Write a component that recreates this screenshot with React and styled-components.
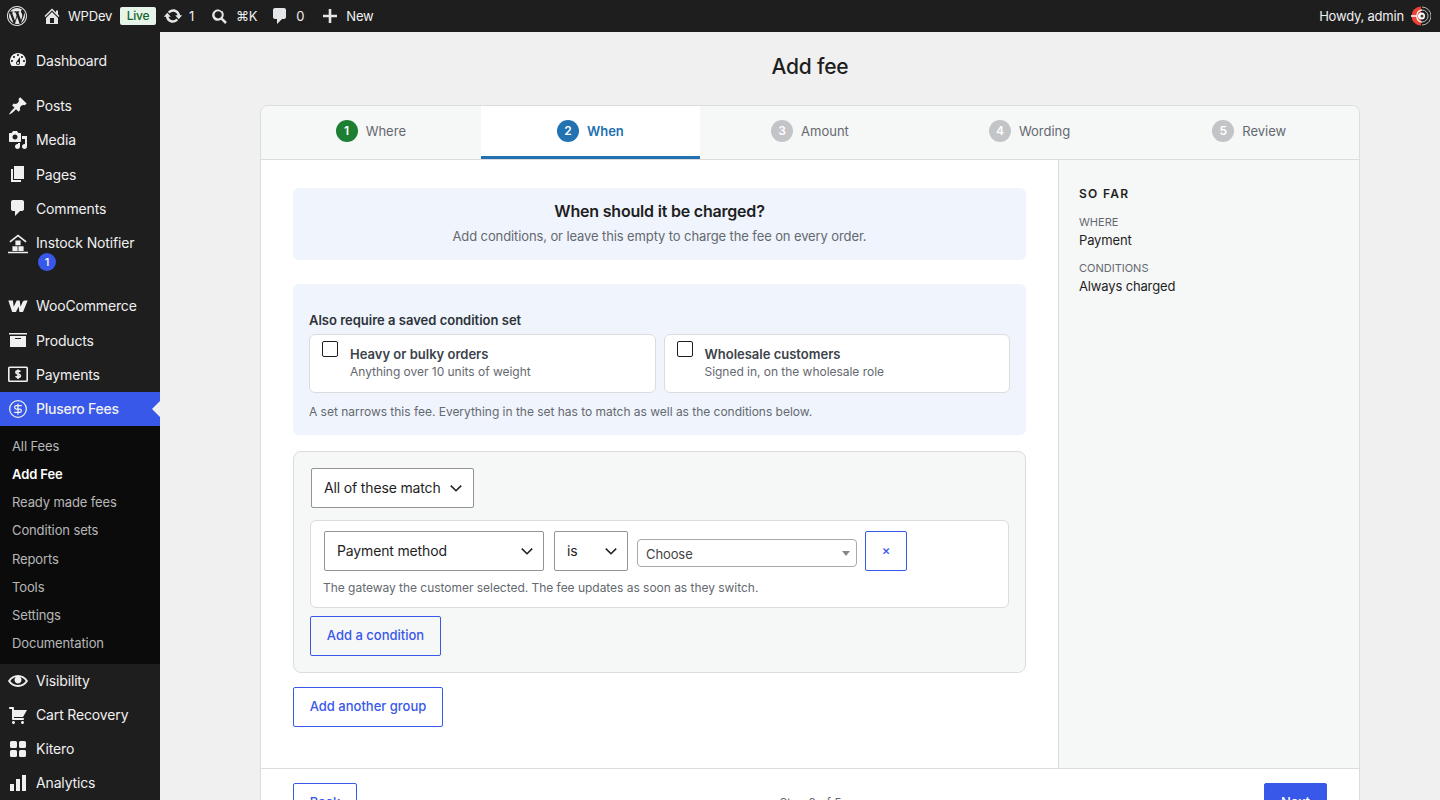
import React from "react";
import styled, { createGlobalStyle } from "styled-components";
import { CircleDollarSign } from "lucide-react";

const Dash = ({ d, size = 20 }) => (
  <svg width={size} height={size} viewBox="0 0 20 20" fill="currentColor">
    <path d={d} />
  </svg>
);

const icons = {
  wp: "M20 10c0-5.52-4.48-10-10-10S0 4.48 0 10s4.48 10 10 10 10-4.48 10-10zM10 1.01c4.96 0 8.99 4.03 8.99 8.99s-4.03 8.99-8.99 8.99S1.01 14.96 1.01 10 5.04 1.01 10 1.01zM8.01 14.82L4.96 6.61c.49-.03 1.05-.08 1.05-.08.43-.05.38-1.01-.06-.99 0 0-1.29.1-2.13.1-.15 0-.33 0-.52-.01 1.44-2.17 3.9-3.6 6.7-3.6 2.09 0 3.99.79 5.41 2.09-.6-.08-1.45.35-1.45 1.42 0 .66.38 1.22.79 1.88.31.54.5 1.22.5 2.21 0 1.34-1.27 4.48-1.27 4.48l-2.71-7.5c.48-.03.75-.16.75-.16.43-.05.38-1.1-.05-1.08 0 0-1.3.11-2.14.11-.78 0-2.11-.11-2.11-.11-.43-.02-.48 1.06-.05 1.08l.84.08 1.12 3.04zm6.02 2.15L16.64 10s.67-1.69.39-3.81c.63 1.14.94 2.42.94 3.81 0 2.96-1.56 5.58-3.94 6.97zM2.68 6.77L6.5 16.96C3.85 15.66 2.03 12.93 2.03 10c0-1.17.23-2.23.65-3.23zm7.45 4.09l2.45 6.74c.01.04.03.08.05.11-.79.25-1.64.4-2.52.4-.74 0-1.46-.11-2.14-.32z",
  home: "M16 8.5l1.53 1.53-1.06 1.06L10 4.62l-6.47 6.47-1.06-1.06L10 2.5l4 4v-2h2v4zm-6-2.46l6 5.99V18H4v-5.97zM12 17v-5H8v5h4z",
  update: "M10.2 3.28c3.53 0 6.43 2.61 6.92 6h2.08l-3.5 4-3.5-4h2.32c-.45-1.97-2.21-3.45-4.32-3.45-1.45 0-2.73.71-3.54 1.78L4.95 5.66C6.23 4.2 8.11 3.28 10.2 3.28zm-.4 13.44c-3.52 0-6.43-2.61-6.92-6H.8l3.5-4c1.17 1.33 2.33 2.67 3.5 4H5.48c.45 1.97 2.21 3.45 4.32 3.45 1.45 0 2.73-.71 3.54-1.78l1.71 1.95c-1.28 1.46-3.15 2.38-5.25 2.38z",
  comment: "M5 2h9c1.1 0 2 .9 2 2v7c0 1.1-.9 2-2 2h-2l-5 5v-5H5c-1.1 0-2-.9-2-2V4c0-1.1.9-2 2-2z",
  search: "M12.14 4.78c1.96 1.96 2.17 5 .6 7.2l4.15 4.14-1.77 1.77-4.14-4.15c-2.2 1.57-5.24 1.36-7.2-.6-2.2-2.2-2.2-5.76 0-7.96s5.76-2.2 7.96 0zm-1.41 1.41c-1.42-1.42-3.72-1.42-5.14 0s-1.42 3.72 0 5.14 3.72 1.42 5.14 0 1.42-3.72 0-5.14z",
  plus: "M8.7 3h2.6v5.7H17v2.6h-5.7V17H8.7v-5.7H3V8.7h5.7z",
  dashboard: "M3.76 16h12.48c1.1-1.37 1.76-3.11 1.76-5 0-4.42-3.58-8-8-8s-8 3.58-8 8c0 1.89.66 3.63 1.76 5zM10 4c.55 0 1 .45 1 1s-.45 1-1 1-1-.45-1-1 .45-1 1-1zM6 6c.55 0 1 .45 1 1s-.45 1-1 1-1-.45-1-1 .45-1 1-1zm8 0c.55 0 1 .45 1 1s-.45 1-1 1-1-.45-1-1 .45-1 1-1zm-5.37 5.55L12 7v6c0 1.1-.9 2-2 2s-2-.9-2-2c0-.57.24-1.08.63-1.45zM4 10c.55 0 1 .45 1 1s-.45 1-1 1-1-.45-1-1 .45-1 1-1zm12 0c.55 0 1 .45 1 1s-.45 1-1 1-1-.45-1-1 .45-1 1-1zm-5 3c0-.55-.45-1-1-1s-1 .45-1 1 .45 1 1 1 1-.45 1-1z",
  post: "M10.44 3.02l1.82-1.82 6.36 6.35-1.83 1.82c-1.05-.68-2.48-.57-3.41.36l-.75.75c-.92.93-1.04 2.35-.35 3.41l-1.83 1.82-2.41-2.41-2.8 2.79c-.42.42-3.38 2.71-3.8 2.29s1.86-3.39 2.28-3.81l2.79-2.79L4.1 9.36l1.83-1.82c1.05.69 2.48.57 3.4-.36l.75-.75c.93-.92 1.05-2.35.36-3.41z",
  media: "M13 11V4c0-.55-.45-1-1-1h-1.67L9 1H5L3.67 3H2c-.55 0-1 .45-1 1v7c0 .55.45 1 1 1h10c.55 0 1-.45 1-1zM7 4.5c1.38 0 2.5 1.12 2.5 2.5S8.38 9.5 7 9.5 4.5 8.38 4.5 7 5.62 4.5 7 4.5zM14 6h5v10.5c0 1.38-1.12 2.5-2.5 2.5S14 17.88 14 16.5s1.12-2.5 2.5-2.5c.17 0 .34.02.5.05V9h-3V6zm-4 8.05V13h2v3.5c0 1.38-1.12 2.5-2.5 2.5S7 17.88 7 16.5 8.12 14 9.5 14c.17 0 .34.02.5.05z",
  page: "M6 15V2h10v13H6zm-1 1h8v2H3V5h2v11z",
  archive: "M19 3v1.4H1V3h18zM2 6h16v11H2V6zm11 3V8H7v1h6z",
  eye: "M19.7 9.4C17.7 6 14 3.9 10 3.9S2.3 6 .3 9.4L0 10l.3.6c2 3.4 5.7 5.5 9.7 5.5s7.7-2.1 9.7-5.5l.3-.6-.3-.6zM10 14.1c-3.1 0-6-1.6-7.7-4.1C3.6 8 5.7 6.6 8 6.1c-.9.6-1.5 1.7-1.5 2.9 0 1.9 1.6 3.5 3.5 3.5s3.5-1.6 3.5-3.5c0-1.2-.6-2.3-1.5-2.9 2.3.5 4.4 1.9 5.7 3.9-1.7 2.5-4.6 4.1-7.7 4.1z",
  cart: "M6 13h9c.55 0 1 .45 1 1s-.45 1-1 1H5c-.55 0-1-.45-1-1V4H2c-.55 0-1-.45-1-1s.45-1 1-1h3c.55 0 1 .45 1 1v2h13l-4 7H6v1zm-.5 3c.83 0 1.5.67 1.5 1.5S6.33 19 5.5 19 4 18.33 4 17.5 4.67 16 5.5 16zm9 0c.83 0 1.5.67 1.5 1.5s-.67 1.5-1.5 1.5-1.5-.67-1.5-1.5.67-1.5 1.5-1.5z",
  grid: "M3.5 2h4A1.5 1.5 0 0 1 9 3.5v4A1.5 1.5 0 0 1 7.5 9h-4A1.5 1.5 0 0 1 2 7.5v-4A1.5 1.5 0 0 1 3.5 2zm9 0h4A1.5 1.5 0 0 1 18 3.5v4A1.5 1.5 0 0 1 16.5 9h-4A1.5 1.5 0 0 1 11 7.5v-4A1.5 1.5 0 0 1 12.5 2zm-9 9h4A1.5 1.5 0 0 1 9 12.5v4A1.5 1.5 0 0 1 7.5 18h-4A1.5 1.5 0 0 1 2 16.5v-4A1.5 1.5 0 0 1 3.5 11zm9 0h4a1.5 1.5 0 0 1 1.5 1.5v4a1.5 1.5 0 0 1-1.5 1.5h-4a1.5 1.5 0 0 1-1.5-1.5v-4a1.5 1.5 0 0 1 1.5-1.5z",
  bars: "M2 11h4v7H2zM8 6h4v12H8zM14 2h4v16h-4z",
  woo: "M.3 4.5h4.6l.8 6.2 3-6.2h3l.8 6.2 2.2-5c.5-.8 1.5-1.2 2.7-1.2h2.3L15 16h-3.6l-.8-5.4L8 16H4.2z",
};

const InstockIcon = () => (
  <svg width="20" height="20" viewBox="0 0 20 20" fill="currentColor">
    <path d="M10 .5 18.6 7.2 17.5 8.4 10 2.6 2.5 8.4 1.4 7.2zM0 17.8h20v1.4H0z" />
    <path d="M7.4 6.4h5.2v4.8H7.4zM4.4 12.2h5.2V17H4.4zM10.4 12.2h5.2V17h-5.2z" />
  </svg>
);

const PaymentsIcon = () => (
  <svg width="20" height="20" viewBox="0 0 20 20" fill="none">
    <rect x=".8" y="3.3" width="18.4" height="14" rx=".8" stroke="currentColor" strokeWidth="1.6" />
    <path d="M12.4 7.8c-.5-.7-1.3-.9-2.4-.9-1.2 0-2.1.5-2.1 1.5 0 2.2 4.5 1 4.5 3.3 0 1-1 1.6-2.4 1.6-1 0-1.9-.4-2.4-1.1M10 5.5v9.4" stroke="currentColor" strokeWidth="1.6" />
  </svg>
);

const AvatarIcon = () => (
  <svg width="20" height="20" viewBox="0 0 20 20">
    <path d="M10 .5a9.5 9.5 0 0 0 0 19z" fill="#ee4035" />
    <path d="M0 10h6M11 3.8a6.3 6.3 0 0 0 0 12.4" fill="none" stroke="#fff" strokeWidth="1.3" />
    <path d="M11 1a9 9 0 0 1 0 18M11 4a6 6 0 0 1 0 12" fill="none" stroke="#c9c9c9" strokeWidth=".9" />
    <circle cx="10.5" cy="10" r="3.5" fill="#fff" />
    <circle cx="11" cy="10" r="1.5" fill="#4a3a3a" />
  </svg>
);

const Chevron = () => (
  <svg width="16" height="16" viewBox="0 0 16 16" fill="none">
    <path d="M2.8 5.6 8 10.8l5.2-5.2" stroke="#1e1e1e" strokeWidth="1.5" />
  </svg>
);

const GlobalStyle = createGlobalStyle`
  html, body {
    margin: 0;
    height: 800px;
    overflow: hidden;
    background: #f0f0f0;
    font-family: Inter, "Liberation Sans", sans-serif;
    color: #1e1e1e;
  }
  * { box-sizing: border-box; }
`;

const AdminBar = styled.header`
  height: 32px;
  background: #1e1e1e;
  color: #f0f0f1;
  display: flex;
  align-items: center;
  justify-content: space-between;
  font-size: 13px;
  letter-spacing: -0.2px;
  padding: 0 9px 0 7px;
`;

const BarGroup = styled.div`
  display: flex;
  align-items: center;
`;

const BarItem = styled.div`
  display: flex;
  align-items: center;
  gap: ${(p) => p.$gap ?? 7}px;
  margin-left: ${(p) => p.$left ?? 0}px;
  svg { display: block; color: #e4e6e8; }
`;

const LivePill = styled.span`
  background: #e6f4ea;
  color: #14642c;
  font-size: 12px;
  font-weight: 500;
  line-height: 18px;
  padding: 0 6.5px;
  border-radius: 2px;
  margin-left: 8px;
`;

const Layout = styled.div`
  display: flex;
  height: 768px;
  overflow: hidden;
`;

const Sidebar = styled.nav`
  width: 160px;
  flex: none;
  background: #1e1e1e;
  padding-top: 11.15px;
`;

const MenuItem = styled.div`
  display: flex;
  height: ${(p) => (p.$tall ? 54 : p.$lower ? 34 : 34.3)}px;
  margin-top: ${(p) => p.$sep ?? 0}px;
  padding: ${(p) => (p.$tall ? "8.85px 0 0 8px" : "0 0 0 8px")};
  align-items: ${(p) => (p.$tall ? "flex-start" : "center")};
  color: #f0f0f1;
  font-size: 14px;
  letter-spacing: ${(p) => (p.$active ? "-0.25px" : "-0.15px")};
  position: relative;
  background: ${(p) => (p.$active ? "#3858e9" : "transparent")};
  font-weight: ${(p) => (p.$active ? 500 : 400)};
  > span:first-child {
    width: 28px;
    flex: none;
    display: flex;
  }
  ${(p) =>
    p.$active &&
    `&::after {
      content: "";
      position: absolute;
      right: 0;
      top: 50%;
      margin-top: -8px;
      border: 8px solid transparent;
      border-right-color: #f0f0f0;
      border-left-width: 0;
    }`}
`;

const MenuCount = styled.span`
  display: block;
  width: 18px;
  height: 18px;
  margin: 2px 0 0 2px;
  border-radius: 50%;
  background: #3858e9;
  color: #fff;
  font-size: 11px;
  font-weight: 500;
  line-height: 18px;
  text-align: center;
`;

const SubMenu = styled.div`
  background: #0b0b0b;
  height: 238.05px;
  padding-top: 6px;
`;

const SubItem = styled.div`
  height: 28.2px;
  line-height: 28.2px;
  padding-left: 12px;
  font-size: 13px;
  letter-spacing: -0.12px;
  color: ${(p) => (p.$current ? "#fff" : "rgba(240,240,241,.75)")};
  font-weight: ${(p) => (p.$current ? 600 : 400)};
`;

const Main = styled.main`
  flex: 1;
  padding: 0 80px 0 100px;
`;

const Title = styled.h1`
  margin: 0;
  height: 73px;
  font-size: 21px;
  font-weight: 500;
  line-height: 70px;
  letter-spacing: -0.2px;
  text-align: center;
`;

const Card = styled.section`
  background: #fff;
  border: 1px solid #dcdcde;
  border-radius: 8px;
  overflow: hidden;
`;

const Tabs = styled.div`
  display: grid;
  grid-template-columns: repeat(5, 1fr);
  height: 54px;
  background: #f6f7f7;
  border-bottom: 1px solid #dcdcde;
`;

const Tab = styled.div`
  display: flex;
  align-items: center;
  justify-content: center;
  gap: 8px;
  height: 53px;
  font-size: 13px;
  color: ${(p) => (p.$active ? "#2271b1" : "#646970")};
  font-weight: ${(p) => (p.$active ? 600 : 400)};
  background: ${(p) => (p.$active ? "#fff" : "transparent")};
  border-bottom: 3px solid ${(p) => (p.$active ? "#2271b1" : "transparent")};
`;

const StepDot = styled.span`
  width: 22px;
  height: 22px;
  border-radius: 50%;
  background: ${(p) => p.$color};
  color: #fff;
  font-size: 12px;
  font-weight: 600;
  line-height: 22px;
  text-align: center;
`;

const Body = styled.div`
  display: flex;
  height: 609px;
  border-bottom: 1px solid #dcdcde;
`;

const Column = styled.div`
  flex: 1;
  padding: 28px 32px 0;
`;

const Intro = styled.div`
  height: 72px;
  border-radius: 6px;
  background: #f0f4fc;
  text-align: center;
  padding-top: 14px;
  h2 {
    margin: 0 0 6px;
    font-size: 16px;
    font-weight: 600;
    line-height: 19px;
    letter-spacing: -0.2px;
    color: #1e1e1e;
  }
  p {
    margin: 0;
    font-size: 13px;
    line-height: 18px;
    letter-spacing: -0.11px;
    color: #646970;
  }
`;

const SetPanel = styled.div`
  margin-top: 24px;
  height: 151px;
  padding: 28px 16px 0;
  border-radius: 6px;
  background: #f0f4fc;
`;

const SetLabel = styled.div`
  font-size: 13px;
  font-weight: 600;
  line-height: 16px;
  color: #2c3338;
  margin-bottom: 6px;
`;

const SetGrid = styled.div`
  display: grid;
  grid-template-columns: 1fr 1fr;
  gap: 8px;
`;

const SetCard = styled.label`
  display: flex;
  gap: 12px;
  height: 59px;
  padding: 6px 12px;
  background: #fff;
  border: 1px solid #dcdcde;
  border-radius: 6px;
  strong {
    display: block;
    margin-top: 5px;
    font-size: 13px;
    font-weight: 600;
    line-height: 16px;
    color: #3c434a;
  }
  small {
    display: block;
    margin-top: 2px;
    font-size: 12px;
    line-height: 16px;
    letter-spacing: -0.03px;
    color: #646970;
  }
`;

const CheckBox = styled.span`
  width: 16px;
  height: 16px;
  flex: none;
  background: #fff;
  border: 1px solid #1e1e1e;
  border-radius: 2px;
`;

const SetNote = styled.p`
  margin: 11px 0 0;
  font-size: 12px;
  line-height: 16px;
  letter-spacing: -0.02px;
  color: #646970;
`;

const Group = styled.div`
  margin-top: 16px;
  height: 222px;
  padding: 16px;
  background: #f6f7f7;
  border: 1px solid #dcdcde;
  border-radius: 8px;
`;

const SelectBox = styled.div`
  display: flex;
  align-items: center;
  justify-content: space-between;
  width: ${(p) => p.$width}px;
  height: 40px;
  margin-left: ${(p) => p.$left ?? 0}px;
  padding: 0 ${(p) => p.$right ?? 7}px 1px 12px;
  background: #fff;
  border: 1px solid #949494;
  border-radius: 2px;
  font-size: 14px;
  letter-spacing: -0.15px;
  color: #1e1e1e;
`;

const ConditionRow = styled.div`
  margin-top: 12px;
  height: 88px;
  padding: 10px 12px;
  background: #fff;
  border: 1px solid #dcdcde;
  border-radius: 6px;
`;

const Controls = styled.div`
  display: flex;
  align-items: center;
  gap: 10px;
  padding-left: 1px;
`;

const Combo = styled.div`
  display: flex;
  align-items: center;
  justify-content: space-between;
  width: 220px;
  height: 28px;
  margin: 4px -2px 0 -1px;
  padding: 1px 6px 0 8px;
  background: #fff;
  border: 1px solid #a7aaad;
  border-radius: 4px;
  font-size: 13px;
  letter-spacing: -0.1px;
  color: #444;
  &::after {
    content: "";
    border: 4px solid transparent;
    border-top: 5px solid #888;
    border-bottom-width: 0;
  }
`;

const Button = styled.button`
  display: block;
  width: ${(p) => p.$width}px;
  height: 40px;
  margin-top: ${(p) => p.$top ?? 0}px;
  padding: 0 0 2px;
  background: ${(p) => (p.$primary ? "#3858e9" : p.$ghost ? "transparent" : "#fff")};
  border: 1px solid #3858e9;
  border-radius: 2px;
  color: ${(p) => (p.$primary ? "#fff" : "#3858e9")};
  font: 500 13px Inter, "Liberation Sans", sans-serif;
`;

const Hint = styled.p`
  margin: 9px 0 0;
  font-size: 12px;
  line-height: 16px;
  letter-spacing: -0.03px;
  color: #646970;
`;

const Aside = styled.aside`
  width: 301px;
  flex: none;
  padding: 26px 20px;
  background: #f6f7f7;
  border-left: 1px solid #dcdcde;
`;

const AsideTitle = styled.h3`
  margin: 0 0 13px;
  font-size: 12px;
  font-weight: 600;
  line-height: 16px;
  letter-spacing: 1.3px;
  color: #1e1e1e;
`;

const AsideLabel = styled.div`
  font-size: 11px;
  line-height: 14px;
  color: #646970;
  margin-top: ${(p) => p.$top ?? 0}px;
`;

const AsideValue = styled.div`
  font-size: 13px;
  line-height: 16px;
  letter-spacing: -0.15px;
  margin-top: 3px;
  color: #1e1e1e;
`;

const Footer = styled.div`
  display: flex;
  align-items: flex-start;
  justify-content: space-between;
  padding: 14px 32px;
  background: #fff;
`;

const StepCount = styled.span`
  font-size: 12px;
  line-height: 16px;
  color: #646970;
  margin-top: 12px;
`;

const steps = [
  { n: 1, label: "Where", color: "#1e7e34" },
  { n: 2, label: "When", color: "#2271b1", active: true },
  { n: 3, label: "Amount", color: "#c3c4c7" },
  { n: 4, label: "Wording", color: "#c3c4c7" },
  { n: 5, label: "Review", color: "#c3c4c7" },
];

const submenu = [
  "All Fees",
  "Add Fee",
  "Ready made fees",
  "Condition sets",
  "Reports",
  "Tools",
  "Settings",
  "Documentation",
];

const App = () => {
  return (
    <>
      <GlobalStyle />
      <AdminBar>
        <BarGroup>
          <BarItem><Dash d={icons.wp} /></BarItem>
          <BarItem $left={15} $gap={6}>
            <Dash d={icons.home} />
            WPDev
          </BarItem>
          <LivePill>Live</LivePill>
          <BarItem $left={7} $gap={6}>
            <Dash d={icons.update} />
            1
          </BarItem>
          <BarItem $left={16} $gap={6}>
            <Dash d={icons.search} />
            ⌘K
          </BarItem>
          <BarItem $left={13} $gap={6}>
            <Dash d={icons.comment} />
            0
          </BarItem>
          <BarItem $left={16} $gap={6}>
            <Dash d={icons.plus} />
            New
          </BarItem>
        </BarGroup>
        <BarItem $gap={7}>
          Howdy, admin
          <AvatarIcon />
        </BarItem>
      </AdminBar>
      <Layout>
        <Sidebar>
          <MenuItem><span><Dash d={icons.dashboard} /></span>Dashboard</MenuItem>
          <MenuItem $sep={11}><span><Dash d={icons.post} /></span>Posts</MenuItem>
          <MenuItem><span><Dash d={icons.media} /></span>Media</MenuItem>
          <MenuItem><span><Dash d={icons.page} /></span>Pages</MenuItem>
          <MenuItem><span><Dash d={icons.comment} /></span>Comments</MenuItem>
          <MenuItem $tall>
            <span><InstockIcon /></span>
            <div>
              Instock Notifier
              <MenuCount>1</MenuCount>
            </div>
          </MenuItem>
          <MenuItem $sep={9.1}><span><Dash d={icons.woo} /></span>WooCommerce</MenuItem>
          <MenuItem><span><Dash d={icons.archive} /></span>Products</MenuItem>
          <MenuItem><span><PaymentsIcon /></span>Payments</MenuItem>
          <MenuItem $active><span><CircleDollarSign size={20} strokeWidth={1.5} /></span>Plusero Fees</MenuItem>
          <SubMenu>
            {submenu.map((item) => (
              <SubItem key={item} $current={item === "Add Fee"}>{item}</SubItem>
            ))}
          </SubMenu>
          <MenuItem $lower><span><Dash d={icons.eye} /></span>Visibility</MenuItem>
          <MenuItem $lower><span><Dash d={icons.cart} /></span>Cart Recovery</MenuItem>
          <MenuItem $lower><span><Dash d={icons.grid} /></span>Kitero</MenuItem>
          <MenuItem $lower><span><Dash d={icons.bars} /></span>Analytics</MenuItem>
        </Sidebar>
        <Main>
          <Title>Add fee</Title>
          <Card>
            <Tabs>
              {steps.map((s) => (
                <Tab key={s.n} $active={s.active}>
                  <StepDot $color={s.color}>{s.n}</StepDot>
                  {s.label}
                </Tab>
              ))}
            </Tabs>
            <Body>
              <Column>
                <Intro>
                  <h2>When should it be charged?</h2>
                  <p>Add conditions, or leave this empty to charge the fee on every order.</p>
                </Intro>
                <SetPanel>
                  <SetLabel>Also require a saved condition set</SetLabel>
                  <SetGrid>
                    <SetCard>
                      <CheckBox />
                      <div>
                        <strong>Heavy or bulky orders</strong>
                        <small>Anything over 10 units of weight</small>
                      </div>
                    </SetCard>
                    <SetCard>
                      <CheckBox />
                      <div>
                        <strong>Wholesale customers</strong>
                        <small>Signed in, on the wholesale role</small>
                      </div>
                    </SetCard>
                  </SetGrid>
                  <SetNote>A set narrows this fee. Everything in the set has to match as well as the conditions below.</SetNote>
                </SetPanel>
                <Group>
                  <SelectBox $width={163} $left={1} $right={9}>All of these match <Chevron /></SelectBox>
                  <ConditionRow>
                    <Controls>
                      <SelectBox $width={220} $right={8}>Payment method <Chevron /></SelectBox>
                      <SelectBox $width={74} $right={8}>is <Chevron /></SelectBox>
                      <Combo>Choose</Combo>
                      <Button $width={42}>×</Button>
                    </Controls>
                    <Hint>The gateway the customer selected. The fee updates as soon as they switch.</Hint>
                  </ConditionRow>
                  <Button $width={131} $top={8} $ghost>Add a condition</Button>
                </Group>
                <Button $width={150} $top={14}>Add another group</Button>
              </Column>
              <Aside>
                <AsideTitle>SO FAR</AsideTitle>
                <AsideLabel>WHERE</AsideLabel>
                <AsideValue>Payment</AsideValue>
                <AsideLabel $top={13}>CONDITIONS</AsideLabel>
                <AsideValue>Always charged</AsideValue>
              </Aside>
            </Body>
            <Footer>
              <Button $width={64}>Back</Button>
              <StepCount>Step 2 of 5</StepCount>
              <Button $width={63} $primary>Next</Button>
            </Footer>
          </Card>
        </Main>
      </Layout>
    </>
  );
};

export default App;
